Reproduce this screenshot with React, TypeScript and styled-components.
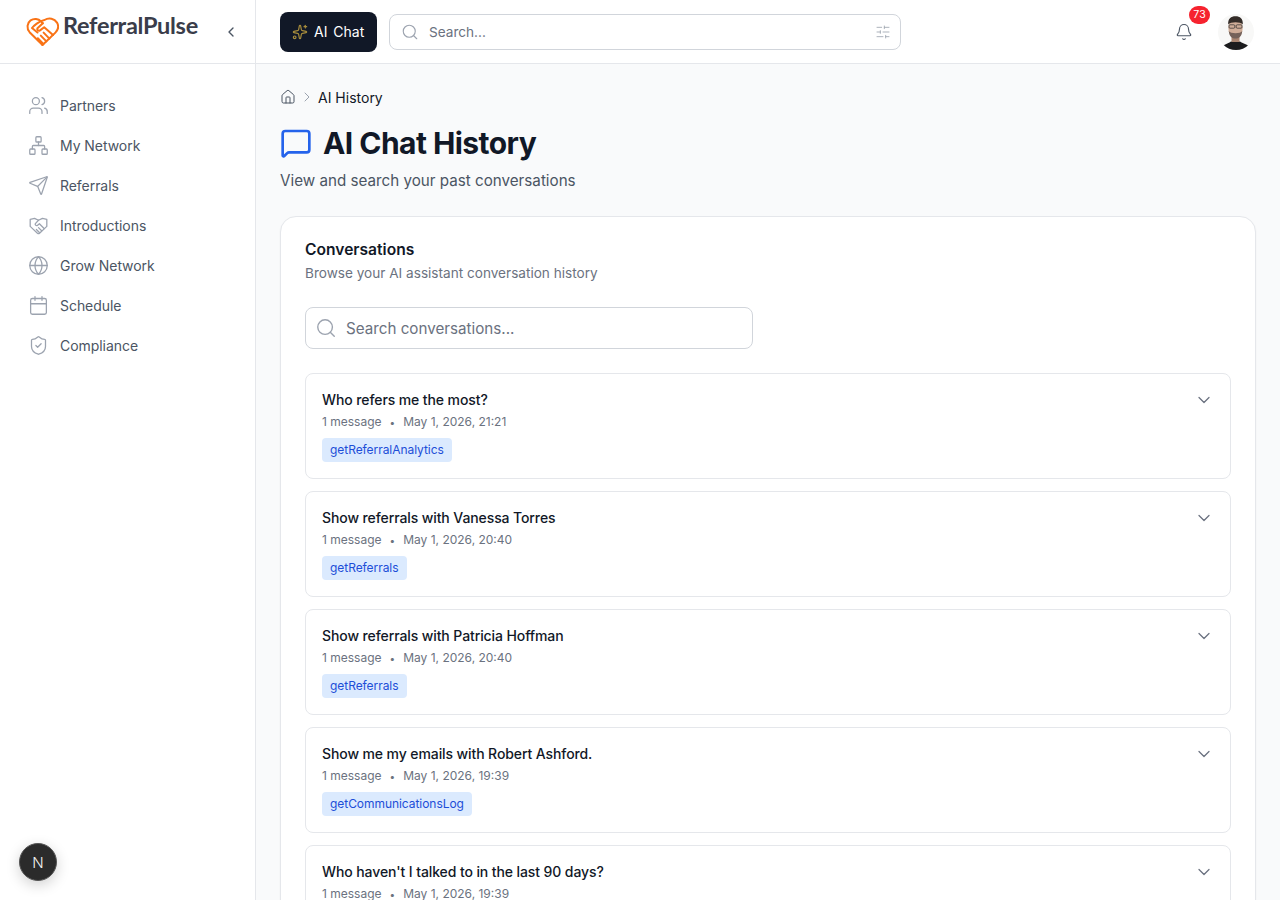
import React from "react";
import styled, { createGlobalStyle } from "styled-components";
import {
  Bell,
  Calendar,
  ChevronDown,
  ChevronLeft,
  ChevronRight,
  Globe,
  House,
  MessageSquare,
  Network,
  Search,
  Send,
  ShieldCheck,
  SlidersHorizontal,
  Sparkles,
  Users,
} from "lucide-react";

const GlobalStyle = createGlobalStyle`
  html, body {
    margin: 0;
    padding: 0;
    height: 100%;
    overflow: hidden;
    background: #f9fafb;
    font-family: Inter, "Liberation Sans", sans-serif;
    color: #111827;
  }
  * {
    box-sizing: border-box;
  }
`;

const Shell = styled.div`
  display: flex;
  height: 900px;
  overflow: hidden;
`;

const Sidebar = styled.aside`
  position: relative;
  flex: 0 0 256px;
  display: flex;
  flex-direction: column;
  background: #fff;
  border-right: 1px solid #e5e7eb;
`;

const LogoBar = styled.div`
  display: flex;
  align-items: center;
  height: 64px;
  padding: 0 16px 0 26px;
  border-bottom: 1px solid #e5e7eb;
`;

const LogoText = styled.span`
  margin: 0 0 11px 4px;
  font-family: Lato, "Liberation Sans", sans-serif;
  font-size: 23.5px;
  font-weight: 700;
  letter-spacing: -0.3px;
  line-height: 1;
  color: #3a3d4a;
`;

const CollapseButton = styled.button`
  display: flex;
  margin-left: auto;
  padding: 0;
  border: 0;
  background: none;
  color: #4b5563;
`;

const Nav = styled.nav`
  display: flex;
  flex-direction: column;
  padding-top: 21px;
`;

const NavItem = styled.a`
  display: flex;
  align-items: center;
  gap: 11px;
  height: 40px;
  padding-left: 28px;
  font-size: 14px;
  font-weight: 400;
  letter-spacing: -0.05px;
  color: #4b5563;

  svg {
    color: #9ca3af;
    flex: none;
  }
`;

const DevBadge = styled.div`
  position: absolute;
  left: 19px;
  bottom: 19px;
  display: flex;
  align-items: center;
  justify-content: center;
  width: 38px;
  height: 38px;
  border-radius: 50%;
  border: 1px solid #555;
  background: #2b2b2b;
  color: #f2f2f2;
  font-size: 15px;
  font-weight: 300;
  box-shadow: 0 4px 14px rgba(0, 0, 0, 0.18);
`;

const Column = styled.div`
  flex: 1;
  min-width: 0;
  display: flex;
  flex-direction: column;
`;

const TopBar = styled.header`
  flex: 0 0 64px;
  display: flex;
  align-items: center;
  padding: 0 26px 0 24px;
  background: #fff;
  border-bottom: 1px solid #e5e7eb;
`;

const ChatButton = styled.button`
  display: flex;
  align-items: center;
  gap: 6px;
  width: 97px;
  height: 40px;
  padding: 0 0 0 12px;
  border: 0;
  border-radius: 8px;
  background: #111827;
  color: #fff;
  font-family: inherit;
  font-size: 14px;
  font-weight: 400;
  word-spacing: 2px;
  white-space: nowrap;

  svg {
    color: #a88d3c;
    flex: none;
  }
`;

const TopSearch = styled.div`
  display: flex;
  align-items: center;
  width: 512px;
  height: 36px;
  margin-left: 12px;
  padding: 0 9px 0 11px;
  border: 1px solid #d1d5db;
  border-radius: 8px;
  background: #fff;
  font-size: 13.6px;
  color: #6b7280;

  svg {
    color: #9ca3af;
    flex: none;
  }
`;

const TopSearchText = styled.span`
  flex: 1;
  margin-left: 10px;
`;

const TopRight = styled.div`
  display: flex;
  align-items: center;
  margin-left: auto;
`;

const BellWrap = styled.div`
  position: relative;
  display: flex;
  margin-right: 25px;
  color: #4b5563;
`;

const CountBadge = styled.span`
  position: absolute;
  top: -17px;
  left: 14px;
  display: flex;
  align-items: center;
  justify-content: center;
  width: 21px;
  height: 18px;
  border-radius: 9px;
  background: #f6232f;
  color: #fff;
  font-size: 10.5px;
  font-weight: 400;
`;

const Avatar = styled.svg`
  display: block;
  width: 36px;
  height: 36px;
  border-radius: 50%;
`;

const Main = styled.main`
  flex: 1;
  min-height: 0;
  overflow: hidden;
  padding: 23px 24px 0;
`;

const Breadcrumb = styled.div`
  display: flex;
  align-items: center;
  gap: 3px;
  height: 20px;
  font-size: 14px;
  font-weight: 400;
  color: #111827;
`;

const HomeIcon = styled.span`
  display: flex;
  color: #4b5563;
`;

const CrumbArrow = styled.span`
  display: flex;
  color: #9ca3af;
`;

const TitleRow = styled.div`
  display: flex;
  align-items: center;
  gap: 11px;
  margin-top: 16px;
  height: 40px;

  svg {
    color: #2563eb;
    flex: none;
  }
`;

const Title = styled.h1`
  margin: 0;
  font-size: 30px;
  font-weight: 700;
  line-height: 36px;
  letter-spacing: -0.55px;
  color: #111827;
`;

const Subtitle = styled.p`
  margin: 6px 0 0;
  font-size: 15.2px;
  line-height: 24px;
  color: #4b5563;
`;

const Card = styled.section`
  margin-top: 23px;
  padding: 23px 24px 24px;
  background: #fff;
  border: 1px solid #e5e7eb;
  border-radius: 16px;
  box-shadow: 0 1px 2px rgba(0, 0, 0, 0.05);
`;

const CardTitle = styled.h2`
  margin: 0;
  font-size: 15.6px;
  font-weight: 600;
  line-height: 20px;
  color: #111827;
`;

const CardSub = styled.p`
  margin: 3px 0 0;
  font-size: 13.6px;
  line-height: 20px;
  color: #6b7280;
`;

const ConvSearch = styled.div`
  display: flex;
  align-items: center;
  gap: 9px;
  width: 448px;
  height: 42px;
  margin-top: 24px;
  padding: 0 9px;
  border: 1px solid #d1d5db;
  border-radius: 8px;
  font-size: 15.2px;
  color: #6b7280;

  svg {
    color: #9ca3af;
    flex: none;
  }
`;

const List = styled.div`
  display: flex;
  flex-direction: column;
  gap: 12px;
  margin-top: 24px;
`;

const Row = styled.article`
  display: flex;
  justify-content: space-between;
  height: 106px;
  padding: 16px;
  border: 1px solid #e5e7eb;
  border-radius: 8px;
  background: #fff;
`;

const RowBody = styled.div`
  display: flex;
  flex-direction: column;
  align-items: flex-start;
`;

const RowTitle = styled.div`
  font-size: 14px;
  font-weight: 500;
  line-height: 20px;
  letter-spacing: -0.1px;
  color: #111827;
`;

const RowMeta = styled.div`
  display: flex;
  gap: 8px;
  margin-top: 2px;
  font-size: 12px;
  line-height: 20px;
  color: #6b7280;
`;

const MetaDot = styled.span`
  font-size: 10px;
`;

const Tag = styled.span`
  margin-top: 6px;
  padding: 0 8px;
  height: 24px;
  border-radius: 4px;
  background: #dbeafe;
  font-size: 12px;
  line-height: 24px;
  letter-spacing: -0.05px;
  color: #1d4ed8;
`;

const RowChevron = styled.span`
  display: flex;
  height: 20px;
  color: #6b7280;
`;

const HandshakeBadge = ({ size, strokeWidth }: { size: number; strokeWidth: number }) => (
  <svg
    width={size}
    height={size}
    viewBox="0 0 24 24"
    fill="none"
    stroke="currentColor"
    strokeWidth={strokeWidth}
    strokeLinecap="round"
    strokeLinejoin="round"
  >
    <path d="M2.5 5 L2.5 13 L10.8 20.8 Q12 21.8 13.2 20.8 L21.5 13 V5 L16.5 3.8 L12 6 L7.5 3.8 Z" />
    <path d="M12 6 L8.4 9.8 C7.6 11.4 9.6 12.8 11 11.6 L13 10 L18.4 15.4" />
    <path d="M15.6 18 L12 14.4" />
    <path d="M13 20 L9.6 16.6" />
  </svg>
);

const navItems = [
  { label: "Partners", icon: Users },
  { label: "My Network", icon: Network },
  { label: "Referrals", icon: Send },
  { label: "Introductions", icon: HandshakeBadge },
  { label: "Grow Network", icon: Globe },
  { label: "Schedule", icon: Calendar },
  { label: "Compliance", icon: ShieldCheck },
];

const conversations = [
  { title: "Who refers me the most?", date: "May 1, 2026, 21:21", tag: "getReferralAnalytics" },
  { title: "Show referrals with Vanessa Torres", date: "May 1, 2026, 20:40", tag: "getReferrals" },
  { title: "Show referrals with Patricia Hoffman", date: "May 1, 2026, 20:40", tag: "getReferrals" },
  { title: "Show me my emails with Robert Ashford.", date: "May 1, 2026, 19:39", tag: "getCommunicationsLog" },
  { title: "Who haven't I talked to in the last 90 days?", date: "May 1, 2026, 19:39", tag: "getPartners" },
];

const LogoMark = () => (
  <svg width="33" height="33" viewBox="0 0 33 33" fill="none" stroke="#f97316" strokeWidth="2" strokeLinecap="round" strokeLinejoin="round">
    <path d="M16.5 30 L3.6 17.2 C0.4 13.6 1 8 4.6 5.4 C8 3 12.4 3.6 15 6.4 L16.8 8.2" />
    <path d="M11.5 17.5 L6 13 C7 11.5 13.5 5.5 18.5 5 C23 2.2 28.5 3.6 31 7.6 C33 11.2 32 15 29.4 17.6 L16.5 30" />
    <path d="M16.8 8.2 L11.5 13.2 C10.5 14.6 12.4 16.4 14 15.4 L18.2 12.2 L27 20" />
    <path d="M23.4 23.6 L17.6 17.6" />
    <path d="M20.4 26.4 L14.8 20.6" />
    <path d="M17.4 29 L11.8 23.2" />
  </svg>
);

const AvatarPhoto = () => (
  <Avatar viewBox="0 0 36 36">
    <rect width="36" height="36" fill="#f8f8f7" />
    <path d="M2 36 C4 31 9 30 13 27.5 L22 27.5 C26 30 32 31 34 36 Z" fill="#1b1b1d" />
    <rect x="13.5" y="22" width="8" height="6" fill="#a98470" />
    <ellipse cx="17.5" cy="14" rx="7.2" ry="10" fill="#d0ad98" />
    <path d="M10.2 10.5 C9.8 4.5 13 2.2 17.5 2.2 C22 2.2 25.2 4.5 24.8 10.5 C22.5 7.4 12.5 7.4 10.2 10.5 Z" fill="#332c28" />
    <path d="M10.8 17 C11.2 23 14.5 24.6 17.5 24.6 C20.5 24.6 23.8 23 24.2 17 C22.5 20 12.5 20 10.8 17 Z" fill="#75625a" />
    <rect x="11" y="10.8" width="5.8" height="3.4" rx="1" fill="none" stroke="#2a2a2a" strokeWidth="0.7" />
    <rect x="18.2" y="10.8" width="5.8" height="3.4" rx="1" fill="none" stroke="#2a2a2a" strokeWidth="0.7" />
  </Avatar>
);

export default function App() {
  return (
    <>
      <GlobalStyle />
      <Shell>
        <Sidebar>
          <LogoBar>
            <LogoMark />
            <LogoText>ReferralPulse</LogoText>
            <CollapseButton>
              <ChevronLeft size={16} />
            </CollapseButton>
          </LogoBar>
          <Nav>
            {navItems.map(({ label, icon: Icon }) => (
              <NavItem key={label}>
                <Icon size={21} strokeWidth={1.45} />
                {label}
              </NavItem>
            ))}
          </Nav>
          <DevBadge>N</DevBadge>
        </Sidebar>
        <Column>
          <TopBar>
            <ChatButton>
              <Sparkles size={16} strokeWidth={1.75} />
              AI Chat
            </ChatButton>
            <TopSearch>
              <Search size={18} strokeWidth={1.5} />
              <TopSearchText>Search...</TopSearchText>
              <SlidersHorizontal size={16} strokeWidth={1.25} />
            </TopSearch>
            <TopRight>
              <BellWrap>
                <Bell size={18} strokeWidth={1.5} />
                <CountBadge>73</CountBadge>
              </BellWrap>
              <AvatarPhoto />
            </TopRight>
          </TopBar>
          <Main>
            <Breadcrumb>
              <HomeIcon>
                <House size={16} strokeWidth={1.5} />
              </HomeIcon>
              <CrumbArrow>
                <ChevronRight size={16} strokeWidth={1.5} />
              </CrumbArrow>
              AI History
            </Breadcrumb>
            <TitleRow>
              <MessageSquare size={32} strokeWidth={2} />
              <Title>AI Chat History</Title>
            </TitleRow>
            <Subtitle>View and search your past conversations</Subtitle>
            <Card>
              <CardTitle>Conversations</CardTitle>
              <CardSub>Browse your AI assistant conversation history</CardSub>
              <ConvSearch>
                <Search size={22} strokeWidth={1.5} />
                Search conversations...
              </ConvSearch>
              <List>
                {conversations.map((c) => (
                  <Row key={c.title}>
                    <RowBody>
                      <RowTitle>{c.title}</RowTitle>
                      <RowMeta>
                        <span>1 message</span>
                        <MetaDot>•</MetaDot>
                        <span>{c.date}</span>
                      </RowMeta>
                      <Tag>{c.tag}</Tag>
                    </RowBody>
                    <RowChevron>
                      <ChevronDown size={20} strokeWidth={1.5} />
                    </RowChevron>
                  </Row>
                ))}
              </List>
            </Card>
          </Main>
        </Column>
      </Shell>
    </>
  );
}
